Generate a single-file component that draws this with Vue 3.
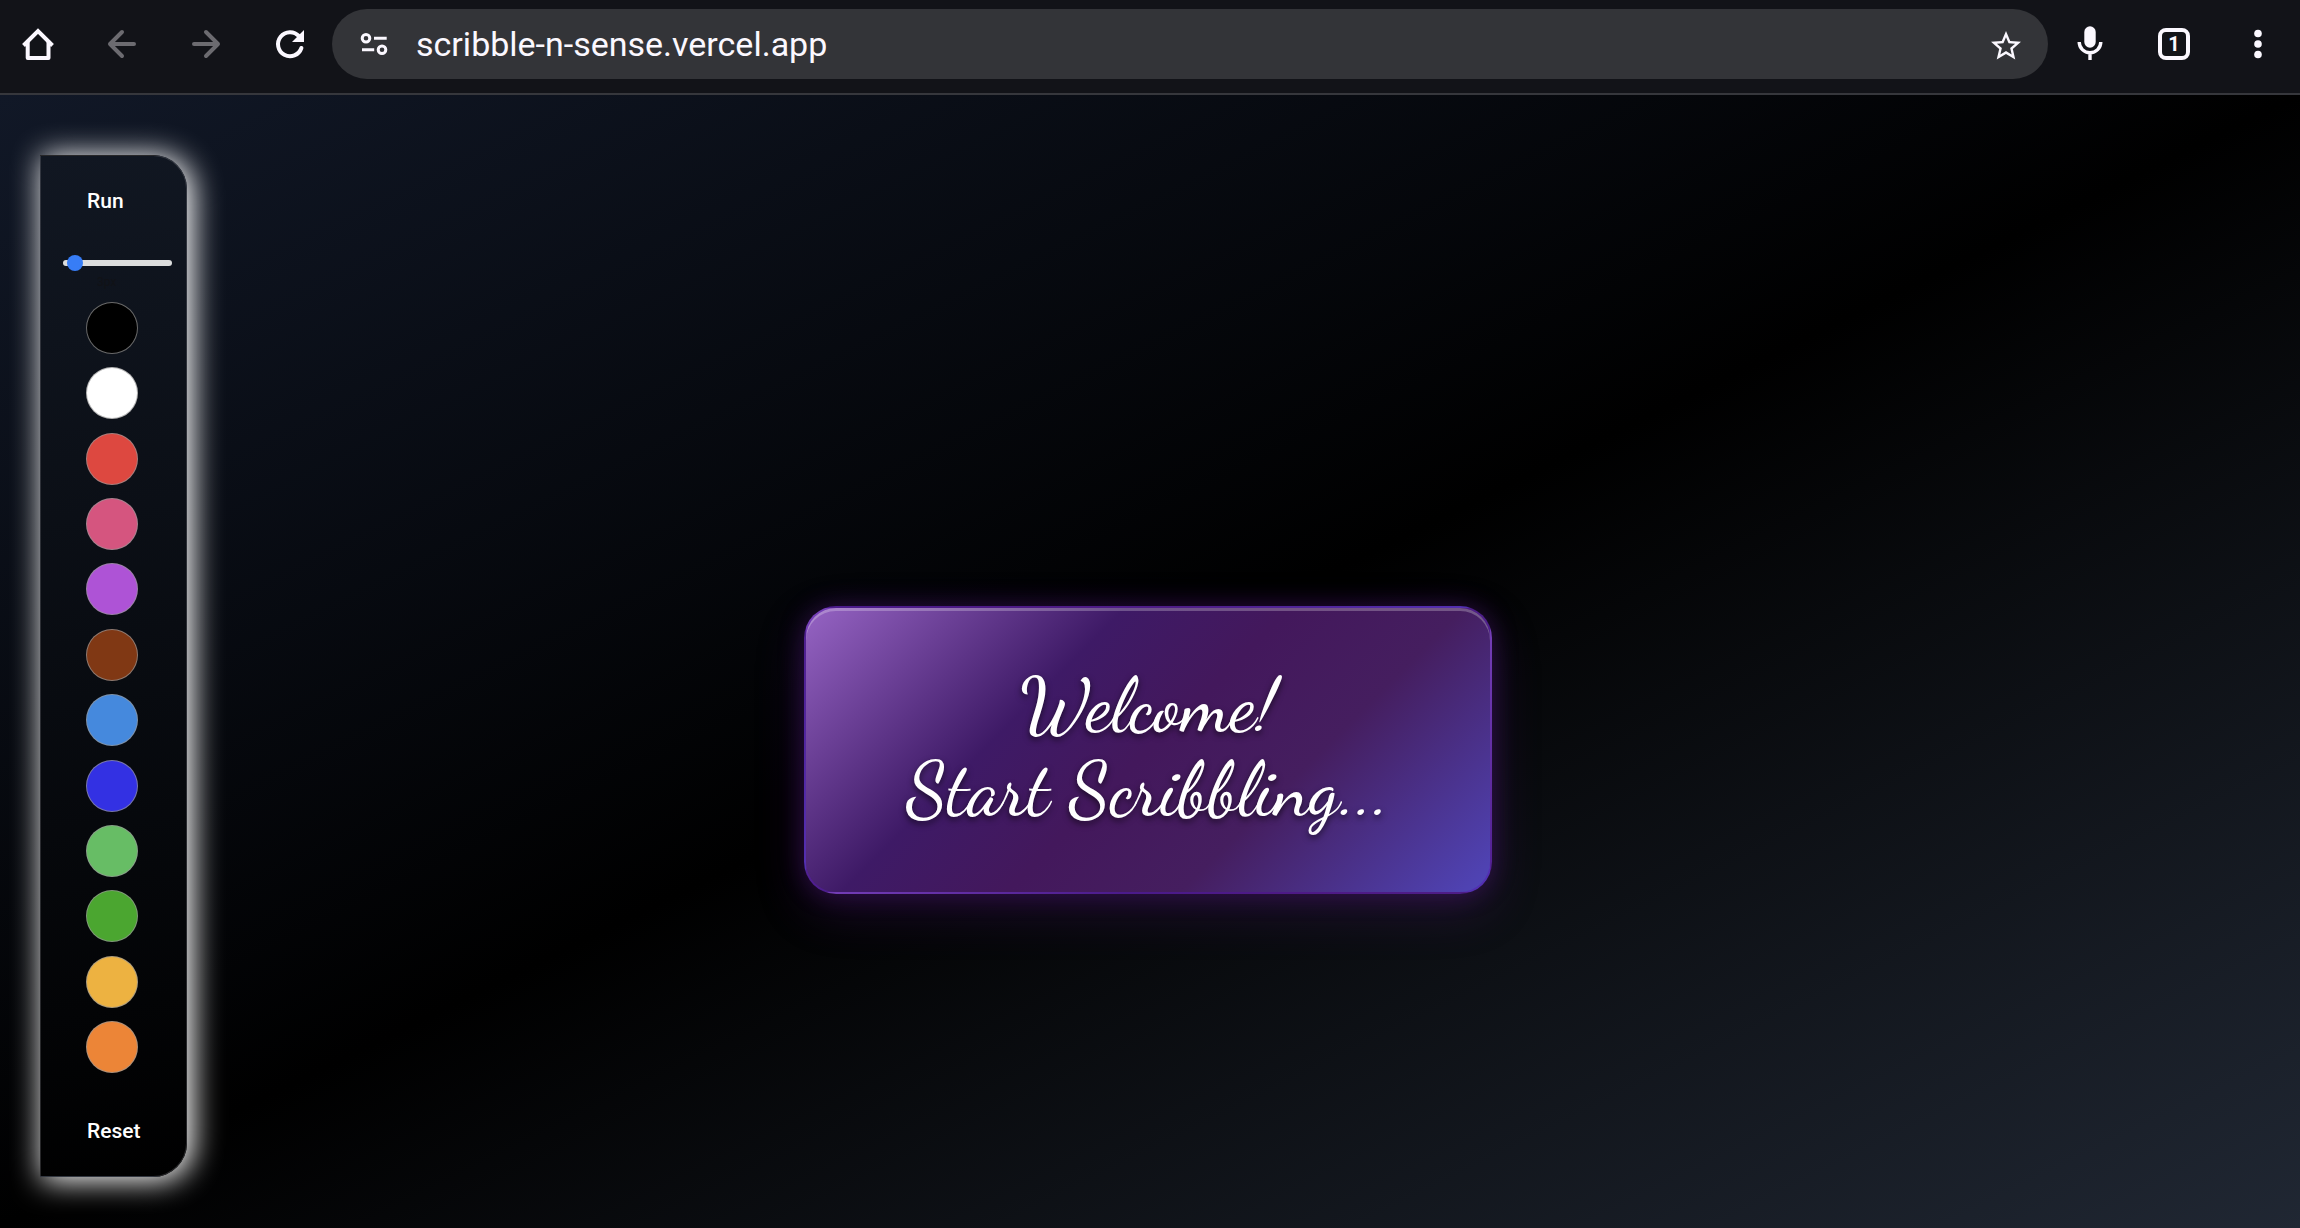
<script setup>
import { ref } from 'vue'

const url = ref('scribble-n-sense.vercel.app')
const brush = ref(3)
const selected = ref('Black')
const swatches = [
  { name: 'Black', color: '#000000' },
  { name: 'White', color: '#ffffff' },
  { name: 'Red', color: '#dd4840' },
  { name: 'Pink', color: '#d5557f' },
  { name: 'Purple', color: '#ae53d6' },
  { name: 'Brown', color: '#803814' },
  { name: 'Sky', color: '#4589dd' },
  { name: 'Blue', color: '#3331e3' },
  { name: 'Light green', color: '#67bd65' },
  { name: 'Green', color: '#4ba630' },
  { name: 'Yellow', color: '#edb241' },
  { name: 'Orange', color: '#ec8537' },
]
</script>

<template>
  <div class="page">
    <header class="browser-bar">
      <nav class="group" aria-label="Navigation">
        <button class="icon-btn" aria-label="Home">
          <svg viewBox="0 0 48 48" fill="none" stroke="currentColor" stroke-width="4" stroke-linecap="round" stroke-linejoin="round">
            <path stroke-linecap="butt" stroke-linejoin="miter" d="M9.5 25.5 24 11 38.5 25.5" />
            <path d="M13.7 22V38H34.5V22" />
          </svg>
        </button>
        <button class="icon-btn dim" aria-label="Back">
          <svg viewBox="0 0 48 48" fill="none" stroke="currentColor" stroke-width="4" stroke-linecap="round" stroke-linejoin="round">
            <path d="M36 24H12M24 12 12 24 24 36" />
          </svg>
        </button>
        <button class="icon-btn dim" aria-label="Forward">
          <svg viewBox="0 0 48 48" fill="none" stroke="currentColor" stroke-width="4" stroke-linecap="round" stroke-linejoin="round">
            <path d="M12 24H36M24 12 36 24 24 36" />
          </svg>
        </button>
        <button class="icon-btn" aria-label="Reload">
          <svg viewBox="0 0 48 48" fill="none" stroke="currentColor" stroke-width="4" stroke-linecap="round">
            <path d="M35.4 28A12 12 0 1 1 33 16.2" />
            <path d="M38 10V22H26Z" fill="currentColor" stroke="none" />
          </svg>
        </button>
      </nav>

      <div class="address">
        <button class="icon-btn" aria-label="Site settings">
          <svg viewBox="0 0 48 48" fill="none" stroke="currentColor" stroke-width="3">
            <circle cx="16" cy="18.3" r="3.8" />
            <circle cx="32" cy="29.7" r="3.8" />
            <path d="M24 18.3H36.7M12 29.7H24.2" />
          </svg>
        </button>
        <input v-model="url" class="url" type="text" aria-label="Address" />
        <button class="icon-btn" aria-label="Bookmark">
          <svg viewBox="0 0 48 48" fill="currentColor">
            <path transform="translate(6 8) scale(1.5)" d="M22 9.24l-7.19-.62L12 2 9.19 8.63 2 9.24l5.46 4.73L5.82 21 12 17.27 18.18 21l-1.63-7.03L22 9.24zM12 15.4l-3.76 2.27 1-4.28-3.32-2.88 4.38-.38L12 6.1l1.71 4.04 4.38.38-3.32 2.88 1 4.28L12 15.4z" />
          </svg>
        </button>
      </div>

      <div class="group">
        <button class="icon-btn" aria-label="Voice search">
          <svg viewBox="0 0 48 48" fill="none" stroke="currentColor" stroke-width="3.4">
            <rect x="18.3" y="6.3" width="11.4" height="21.4" rx="5.7" fill="currentColor" stroke="none" />
            <path d="M13.2 22A10.8 10.8 0 0 0 34.8 22M24 32.5V40" />
          </svg>
        </button>
        <button class="icon-btn" aria-label="Tabs"><span class="tabs">1</span></button>
        <button class="icon-btn" aria-label="Menu">
          <svg viewBox="0 0 48 48" fill="currentColor">
            <circle cx="24" cy="13.5" r="3.8" />
            <circle cx="24" cy="24" r="3.8" />
            <circle cx="24" cy="34.5" r="3.8" />
          </svg>
        </button>
      </div>
    </header>

    <main class="board">
      <aside class="tools">
        <button class="action">Run</button>
        <input id="brush" v-model="brush" class="slider" type="range" min="1" max="50" />
        <label class="size" for="brush">{{ brush }}px</label>
        <div class="palette">
          <button
            v-for="s in swatches"
            :key="s.name"
            class="swatch"
            :aria-label="s.name"
            :aria-pressed="selected === s.name"
            :style="{ backgroundColor: s.color }"
            @click="selected = s.name"
          ></button>
        </div>
        <button class="action">Reset</button>
      </aside>

      <section class="welcome">
        <h1>Welcome!<br />Start Scribbling...</h1>
      </section>
    </main>
  </div>
</template>

<style>
body {
  margin: 0;
  background: #000;
}
</style>

<style scoped>
.page {
  display: flex;
  flex-direction: column;
  min-height: 100vh;
  font-family: Roboto, "Liberation Sans", sans-serif;
}

button,
input {
  margin: 0;
  padding: 0;
  border: 0;
  background: none;
  color: inherit;
  font-family: inherit;
}

/* Browser bar */
.browser-bar {
  display: flex;
  align-items: center;
  gap: 18px;
  padding: 9px 18px 14px 14px;
  border-bottom: 2px solid #36373c;
  background: #121318;
  color: #fbf8ff;
}

.group {
  display: flex;
  gap: 36px;
}

.icon-btn {
  display: grid;
  flex: none;
  place-items: center;
  width: 48px;
  height: 48px;
}

.icon-btn svg {
  width: 48px;
  height: 48px;
}

.dim {
  color: #6c6b70;
}

.address {
  display: flex;
  flex: 1;
  align-items: center;
  gap: 18px;
  height: 70px;
  padding: 0 18px;
  border-radius: 35px;
  background: #333438;
}

.url {
  flex: 1;
  min-width: 0;
  font-size: 34px;
  line-height: 40px;
  outline: 0;
}

.tabs {
  display: grid;
  box-sizing: border-box;
  place-items: center;
  width: 32px;
  height: 32px;
  border: 4px solid currentColor;
  border-radius: 8px;
  font-size: 20px;
  font-weight: 700;
  line-height: 24px;
}

/* Drawing board */
.board {
  display: grid;
  flex: 1;
  padding-right: 4px;
  background: linear-gradient(to bottom right, #111827, #000 50%, #202733);
}

.tools,
.welcome {
  grid-area: 1 / 1;
  box-sizing: border-box;
}

.tools {
  display: flex;
  flex-direction: column;
  align-items: flex-start;
  justify-self: start;
  width: 147px;
  margin: 60px 40px 51px;
  padding: 33px 0;
  border: 1px solid rgba(128, 128, 136, 0.3);
  border-radius: 0 34px 34px 0;
  background: linear-gradient(170deg, #111722, #000);
  box-shadow: 4px 2px 30px 2px #fff;
  color: #fff;
}

.action {
  margin-left: 46px;
  font-size: 21px;
  font-weight: 500;
  line-height: 24px;
}

.slider {
  width: 109px;
  height: 16px;
  margin: 42px 0 0 22px;
  appearance: none;
}

.slider::-webkit-slider-runnable-track {
  height: 6px;
  border-radius: 3px;
  background: #dcdddd;
}

.slider::-webkit-slider-thumb {
  width: 16px;
  height: 16px;
  margin-top: -5px;
  border-radius: 50%;
  background: #377df6;
  appearance: none;
}

.size {
  margin: 3px 0 12px 56px;
  color: #111216;
  font-size: 12px;
  line-height: 16px;
}

.palette {
  display: flex;
  flex: 1;
  flex-direction: column;
  justify-content: space-between;
  margin: 0 0 46px 45px;
}

.swatch {
  box-sizing: border-box;
  width: 52px;
  height: 52px;
  border: 1px solid rgba(150, 150, 150, 0.7);
  border-radius: 50%;
}

.welcome {
  place-self: center;
  width: 688px;
  max-width: 90%;
  margin-top: 177px;
  padding: 56px 0 60px;
  border: 2px solid rgba(88, 28, 175, 0.5);
  border-radius: 32px;
  background: linear-gradient(135deg, #9664c4, #3e1a66 33%, #43185c 50%, #451e5f 68%, #5046ba);
  box-shadow:
    inset 0 3px 0 rgba(255, 255, 255, 0.25),
    0 0 24px rgba(88, 28, 135, 0.4),
    0 16px 48px rgba(88, 28, 135, 0.3);
}

.welcome h1 {
  margin: 0;
  color: #fff;
  font-family: "Dancing Script", cursive;
  font-size: 75px;
  font-weight: 500;
  line-height: 84px;
  text-align: center;
  text-shadow: 0 3px 6px rgba(0, 0, 0, 0.6);
}
</style>
